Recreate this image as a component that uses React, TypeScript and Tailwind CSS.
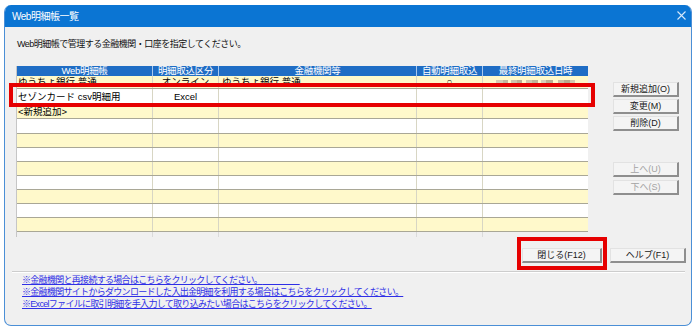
type Row = {
  h: string;
  yellow: boolean;
  top?: boolean;
  cells: string[];
};

const rows: Row[] = [
  { h: 'h-[13px]', yellow: true, top: true, cells: ['ゆうちょ銀行 普通', 'オンライン', 'ゆうちょ銀行 普通', '○', '#blur'] },
  { h: 'h-[15px]', yellow: false, cells: ['セゾンカード csv明細用', 'Excel', '', '', ''] },
  { h: 'h-[15px]', yellow: true, cells: ['<新規追加>', '', '', '', ''] },
  { h: 'h-[15px]', yellow: false, cells: ['', '', '', '', ''] },
  { h: 'h-[14px]', yellow: true, cells: ['', '', '', '', ''] },
  { h: 'h-[14px]', yellow: false, cells: ['', '', '', '', ''] },
  { h: 'h-[14px]', yellow: true, cells: ['', '', '', '', ''] },
  { h: 'h-[14px]', yellow: false, cells: ['', '', '', '', ''] },
  { h: 'h-[14px]', yellow: true, cells: ['', '', '', '', ''] },
  { h: 'h-[14px]', yellow: false, cells: ['', '', '', '', ''] },
  { h: 'h-[14px]', yellow: true, cells: ['', '', '', '', ''] },
];

const headers = ['Web明細帳', '明細取込区分', '金融機関等', '自動明細取込', '最終明細取込日時'];
const align = ['justify-start pl-[1px]', 'justify-center', 'justify-start pl-[3px]', 'justify-center', 'justify-center'];

// mosaic of the hidden date in the first row
const blurBlocks = [
  'bg-[#d6ccb4] w-[7px]', 'bg-[#c2b79d] w-[5px]', 'bg-transparent w-[3px]', 'bg-[#cfc5ac] w-[6px]',
  'bg-[#bdb195] w-[5px]', 'bg-transparent w-[4px]', 'bg-[#d2c8ae] w-[6px]', 'bg-[#c0b497] w-[6px]',
  'bg-transparent w-[3px]', 'bg-[#d8cfb7] w-[5px]', 'bg-[#bcaf92] w-[7px]', 'bg-transparent w-[5px]',
  'bg-[#cbc0a5] w-[6px]', 'bg-[#b8ab8d] w-[6px]', 'bg-[#d4cab0] w-[5px]',
];

function Btn({ label, disabled, w }: { label: string; disabled?: boolean; w: string }) {
  return (
    <div
      className={`${w} h-[15px] flex items-center justify-center text-[9px] leading-none bg-[#f4f4f4] border border-[#e2e2e2] border-r-2 border-b-2 border-r-[#8e8e8e] border-b-[#8e8e8e] ${
        disabled ? 'text-[#a3a3a3]' : 'text-[#1a1a1a]'
      }`}
    >
      {label}
    </div>
  );
}

export default function App() {
  return (
    <div className="w-[698px] h-[330px] bg-white pt-[5px] pl-[4px] font-['Liberation_Sans','Noto_Sans_CJK_JP',sans-serif] text-black">
      <div className="relative w-[688px] h-[321px] rounded-[7px] overflow-hidden bg-[#f0f0f0] border-x border-b border-[#4b8fd6] flex flex-col">
        {/* title bar */}
        <div className="h-[22px] bg-[#0b75d3] flex items-center justify-between pl-[7px] pr-[5px]">
          <span className="text-white text-[10px] tracking-[-0.5px]">Web明細帳一覧</span>
          <svg width="9" height="9" viewBox="0 0 9 9" className="mt-[-1px]">
            <path d="M0.5 0.5 L8.5 8.5 M8.5 0.5 L0.5 8.5" stroke="#d6e8fa" strokeWidth="1.1" />
          </svg>
        </div>

        <div className="mt-[11px] pl-[12px] text-[9px] leading-[12px] tracking-[-0.5px] text-[#111]">
          Web明細帳で管理する金融機関・口座を指定してください。
        </div>

        {/* main area */}
        <div className="mt-[16px] flex">
          <div className="ml-[11px] w-[572px] border-l border-[#c6c6c6]">
            <div className="grid grid-cols-[136px_66px_198px_66px_105px] h-[10px] bg-[#1f6dc5]">
              {headers.map((h, i) => (
                <div
                  key={h}
                  className={`flex items-center justify-center text-white text-[9.5px] leading-[10px] tracking-[-0.3px] overflow-hidden ${
                    i < 4 ? 'border-r border-[#a9c8ee]' : ''
                  }`}
                >
                  {h}
                </div>
              ))}
            </div>
            {rows.map((r, ri) => (
              <div
                key={ri}
                className={`grid grid-cols-[136px_66px_198px_66px_105px] border-b border-[#a9a796] ${r.h} ${
                  r.yellow ? 'bg-[#fff9cb]' : 'bg-white'
                }`}
              >
                {r.cells.map((c, ci) => (
                  <div
                    key={ci}
                    className={`flex ${r.top ? 'items-start' : 'items-center'} ${align[ci]} overflow-hidden whitespace-nowrap text-[9.5px] leading-[11px] ${
                      ci < 4 ? 'border-r border-[#d8d6c4]' : ''
                    }`}
                  >
                    {c === '#blur' ? (
                      <div className="flex mt-[4px] h-[4px]">
                        {blurBlocks.map((b, bi) => (
                          <span key={bi} className={`h-[4px] ${b}`} />
                        ))}
                      </div>
                    ) : (
                      c
                    )}
                  </div>
                ))}
              </div>
            ))}
            <div className="grid grid-cols-[136px_66px_198px_66px_105px] h-[5px]">
              {[0, 1, 2, 3, 4].map((i) => (
                <div key={i} className={i < 4 ? 'border-r border-[#dadada]' : ''} />
              ))}
            </div>
          </div>

          <div className="ml-[25px] pt-[16px] flex flex-col">
            <div className="flex flex-col gap-[2px]">
              <Btn label="新規追加(O)" w="w-[66px]" />
              <Btn label="変更(M)" w="w-[66px]" />
              <Btn label="削除(D)" w="w-[66px]" />
            </div>
            <div className="mt-[31px] flex flex-col gap-[3px]">
              <Btn label="上へ(U)" w="w-[66px]" disabled />
              <Btn label="下へ(S)" w="w-[66px]" disabled />
            </div>
          </div>
        </div>

        {/* bottom buttons */}
        <div className="mt-[11px] flex justify-end gap-[8px] pr-[5px]">
          <Btn label="閉じる(F12)" w="w-[80px]" />
          <Btn label="ヘルプ(F1)" w="w-[76px]" />
        </div>

        <div className="mt-[8px] ml-[7px] mr-[6px] border-t border-[#cdcdcd] border-b border-b-white" />

        <div className="mt-[1px] pl-[17px] flex flex-col text-[9px] leading-[12px] tracking-[-0.7px] text-[#2f2fe6]">
          <div>
            <span className="underline">※金融機関と再接続する場合はこちらをクリックしてください。</span>
            <span className="underline whitespace-pre tracking-normal">{'               '}</span>
          </div>
          <div>
            <span className="underline">※金融機関サイトからダウンロードした入出金明細を利用する場合はこちらをクリックしてください。</span>
          </div>
          <div>
            <span className="underline">※Excelファイルに取引明細を手入力して取り込みたい場合はこちらをクリックしてください。</span>
          </div>
        </div>

        {/* annotation boxes */}
        <div className="absolute left-[4px] top-[78px] w-[586px] h-[24px] border-4 border-[#e60000]" />
        <div className="absolute left-[512px] top-[232px] w-[90px] h-[33px] border-4 border-[#e60000]" />
      </div>
    </div>
  );
}
